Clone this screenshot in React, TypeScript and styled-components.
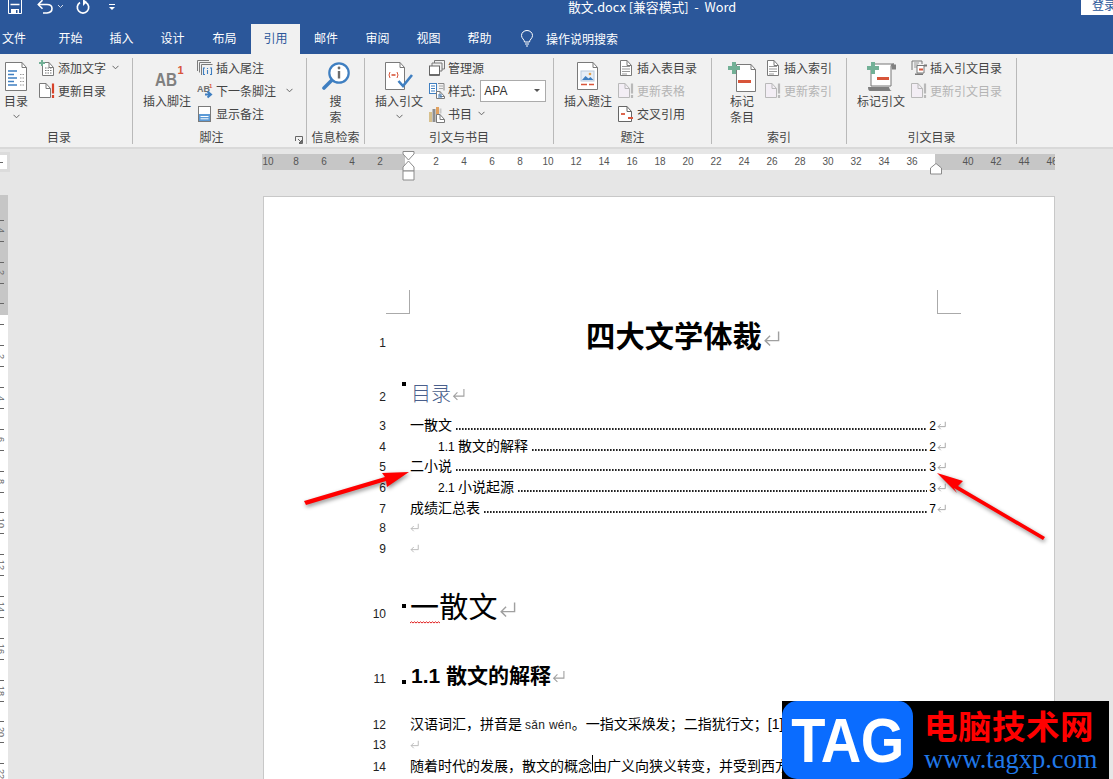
import React from 'react'
import styled, { createGlobalStyle } from 'styled-components'

const UI_FONT = `"Noto Sans CJK SC", sans-serif`
const DOC_FONT = `"Liberation Sans", "Noto Sans CJK SC", sans-serif`
const SERIF_FONT = `"Liberation Serif", "Noto Sans CJK SC", serif`
const OUTLINE = '#7a7a7a'
const BLUE = '#3f7fc1'
const RED = '#d8553a'
const GREEN = '#72b096'

//#region page
const GlobalStyle = createGlobalStyle`
  html, body { margin: 0; padding: 0; background: #e6e6e6; }
  * { box-sizing: border-box; }
`
const Window = styled.div`
  position: relative;
  width: 1113px;
  height: 779px;
  overflow: hidden;
  font-family: ${UI_FONT};
  background: #e6e6e6;
`
const TitleBar = styled.div`
  height: 24px;
  display: flex;
  align-items: flex-start;
  background: #2b579a;
  overflow: hidden;
`
const QuickAccess = styled.div`
  width: 568px;
  display: flex;
  align-items: flex-start;
  padding-left: 8px;
`
const QuickIcon = styled.span<{ $gap: number }>`
  display: block;
  height: 14px;
  margin-right: ${p => p.$gap}px;
  svg { display: block; }
`
const DocTitle = styled.div`
  flex: 1;
  color: #fff;
  font-size: 12.8px;
  line-height: 13px;
  white-space: pre;
`
const LoginButton = styled.div`
  width: 32px;
  height: 15px;
  background: #fff;
  color: #2b579a;
  font-size: 12px;
  line-height: 9px;
  padding-left: 11px;
  overflow: hidden;
  white-space: nowrap;
`
const TabBar = styled.div`
  height: 30px;
  display: flex;
  background: #2b579a;
`
const Tab = styled.div<{ $active?: boolean; $width: number; $left?: number }>`
  width: ${p => p.$width}px;
  flex: none;
  padding-right: ${p => p.$left ?? 0}px;
  text-align: center;
  font-size: 12px;
  line-height: 28px;
  color: ${p => (p.$active ? '#2b579a' : '#fff')};
  background: ${p => (p.$active ? '#f1f1f1' : 'transparent')};
`
const TellMe = styled.div`
  display: flex;
  align-items: center;
  height: 28px;
  gap: 12px;
  margin-left: 15px;
  color: #fff;
  font-size: 12px;
  svg { display: block; }
`
const Ribbon = styled.div`
  height: 95px;
  display: flex;
  padding-top: 4px;
  background: #f1f1f1;
  border-bottom: 2px solid #d9d9d9;
`
const Group = styled.div<{ $width: number }>`
  position: relative;
  width: ${p => p.$width}px;
  height: 86px;
  flex: none;
  display: flex;
  flex-direction: column;
  border-right: 1px solid #b9b9b9;
`
const GroupBody = styled.div<{ $pad: number }>`
  height: 71px;
  display: flex;
  padding-left: ${p => p.$pad}px;
`
const GroupLabel = styled.div<{ $right?: number }>`
  height: 15px;
  line-height: 15px;
  font-size: 12px;
  color: #444;
  text-align: center;
  padding-right: ${p => p.$right ?? 0}px;
`
const Launcher = styled.div`
  position: absolute;
  right: 3px;
  bottom: 0;
  svg { display: block; }
`
const BigButton = styled.div<{ $width: number }>`
  width: ${p => p.$width}px;
  flex: none;
  display: flex;
  flex-direction: column;
  align-items: center;
  padding-top: 4px;
  font-size: 12px;
  line-height: 16px;
  color: #444;
  text-align: center;
  white-space: nowrap;
`
const BigIcon = styled.div`
  height: 31px;
  svg { display: block; }
`
const ChevronLine = styled.div`
  height: 10px;
  display: flex;
  align-items: center;
  justify-content: center;
  margin-top: 2px;
`
const SmallColumn = styled.div<{ $left: number }>`
  margin-left: ${p => p.$left}px;
  margin-top: -2px;
`
const SmallRow = styled.div<{ $disabled?: boolean }>`
  height: 23px;
  display: flex;
  align-items: center;
  gap: 3px;
  font-size: 12px;
  white-space: nowrap;
  color: ${p => (p.$disabled ? '#b4b4b4' : '#444')};
`
const SmallIcon = styled.span`
  width: 16px;
  height: 16px;
  flex: none;
  display: block;
  svg { display: block; }
`
const RowChevron = styled.span<{ $left: number }>`
  display: block;
  margin-left: ${p => p.$left}px;
`
const StyleSelect = styled.div`
  width: 66px;
  height: 22px;
  margin-left: 2px;
  padding: 0 5px 0 3px;
  display: flex;
  align-items: center;
  justify-content: space-between;
  background: #fff;
  border: 1px solid #ababab;
  color: #333;
  font-family: ${DOC_FONT};
  font-size: 12px;
`
const SelectArrow = styled.span`
  width: 0;
  height: 0;
  border-left: 3px solid transparent;
  border-right: 3px solid transparent;
  border-top: 3px solid #555;
`
const RulerRow = styled.div`
  position: relative;
  height: 47px;
  display: flex;
  align-items: flex-start;
  padding-top: 5px;
`
const CornerBox = styled.div`
  width: 10px;
  height: 20px;
  margin-top: -2px;
  display: flex;
  align-items: center;
  background: #fff;
  border: 3px solid #dcdcdc;
  border-left: none;
`
const CornerDash = styled.span`
  width: 3px;
  height: 1px;
  background: #666;
`
const HorizontalRuler = styled.div`
  width: 793px;
  height: 16px;
  margin-left: 252px;
  display: flex;
  overflow: hidden;
  background: linear-gradient(90deg, #c6c6c6 143px, #fff 143px, #fff 673px, #c6c6c6 673px);
`
const RulerScale = styled.div`
  display: flex;
  margin-left: -8px;
`
const RulerNumber = styled.span`
  width: 28px;
  flex: none;
  text-align: center;
  font-family: ${DOC_FONT};
  font-size: 10px;
  line-height: 16px;
  color: #555;
`
const RulerMarker = styled.div<{ $left: number; $top: number }>`
  position: absolute;
  left: ${p => p.$left}px;
  top: ${p => p.$top}px;
  svg { display: block; }
`
const Workspace = styled.div`
  display: flex;
  align-items: flex-start;
`
const VerticalRuler = styled.div`
  width: 8px;
  margin-top: -1px;
  padding-top: 15px;
  height: 590px;
  overflow: hidden;
  background: linear-gradient(180deg, #c6c6c6 120px, #fff 120px);
`
const VerticalCell = styled.div`
  height: 41.8px;
  display: flex;
  flex-direction: column;
  justify-content: center;
  gap: 3px;
`
const VerticalTick = styled.span`
  display: block;
  width: 4px;
  height: 1px;
  background: #666;
`
const VerticalDigit = styled.span`
  height: 14px;
  width: 8px;
  margin-left: -3px;
  writing-mode: vertical-rl;
  text-align: center;
  font-family: ${DOC_FONT};
  font-size: 9px;
  line-height: 8px;
  color: #666;
  white-space: nowrap;
`
const Page = styled.div`
  position: relative;
  width: 792px;
  height: 640px;
  margin-left: 255px;
  padding-top: 120px;
  background: #fff;
  border: 1px solid #c8c8c8;
`
const CropMark = styled.div<{ $left: number; $side: 'left' | 'right' }>`
  position: absolute;
  top: 93px;
  left: ${p => p.$left}px;
  width: 24px;
  height: 24px;
  border-bottom: 1px solid #aaa;
  ${p => (p.$side === 'left' ? 'border-right: 1px solid #aaa;' : 'border-left: 1px solid #aaa;')}
`
const Line = styled.div<{ $h: number; $top?: number }>`
  position: relative;
  display: grid;
  grid-template-columns: 122px 1fr;
  column-gap: 24px;
  align-items: baseline;
  height: ${p => p.$h}px;
  margin-top: ${p => p.$top ?? 0}px;
  line-height: ${p => p.$h}px;
  color: #000;
  font-family: ${DOC_FONT};
  font-size: 14px;
  padding-right: 108px;
`
const LineNumber = styled.span`
  text-align: right;
  font-family: ${DOC_FONT};
  font-size: 12px;
  color: #222;
`
const LineText = styled.div<{ $indent?: number }>`
  display: flex;
  align-items: baseline;
  min-width: 0;
  padding-left: ${p => p.$indent ?? 0}px;
  white-space: nowrap;
`
const Latin = styled.span`
  font-size: 12px;
  white-space: pre;
`
const MainTitle = styled.div`
  width: 528px;
  text-align: center;
  font-size: 29.3px;
  font-weight: 700;
`
const TocHeading = styled.div`
  padding-left: 1px;
  color: #4a5f8c;
  font-size: 20px;
  font-weight: 300;
`
const Heading1 = styled.div`
  position: relative;
  font-family: ${SERIF_FONT};
  font-size: 29px;
  letter-spacing: 0.3px;
`
const Squiggle = styled.span`
  position: absolute;
  left: 0;
  bottom: 4px;
  svg { display: block; }
`
const Heading2 = styled.div`
  padding-left: 1px;
  font-size: 21px;
  font-weight: 700;
`
const TocLeader = styled.span`
  flex: 1;
  height: 2px;
  margin: 0 2px 0 4px;
  background: linear-gradient(90deg, #222 1px, #777 1px, #777 2px, transparent 2px) 0 0 / 3px 2px repeat-x;
`
const Pinyin = styled.span`
  margin: 0 0 0 3px;
  font-size: 12px;
  letter-spacing: 0.3px;
  color: #222;
`
const Caret = styled.span`
  display: inline-block;
  width: 1px;
  height: 16px;
  margin-bottom: -3px;
  background: #000;
`
const ParaBullet = styled.span<{ $top: number }>`
  position: absolute;
  left: 138px;
  top: ${p => p.$top}px;
  width: 4px;
  height: 4px;
  background: #000;
`
const MarkWrap = styled.span<{ $over?: number }>`
  display: inline-block;
  margin-left: 1px;
  margin-right: ${p => (p.$over ? -p.$over : 0)}px;
`
const ArrowLayer = styled.svg`
  position: absolute;
  left: 0;
  top: 0;
  filter: drop-shadow(1px 2px 2px rgba(0, 0, 0, 0.45));
`
const Watermark = styled.div`
  position: absolute;
  left: 782px;
  top: 701px;
  width: 327px;
  height: 78px;
  display: flex;
  background: #000;
`
const LogoBadge = styled.div`
  width: 131px;
  height: 78px;
  border-radius: 15px;
  background: #0a6cff;
  color: #fff;
  font-family: ${DOC_FONT};
  font-size: 56px;
  font-weight: 700;
  line-height: 78px;
  text-align: center;
  letter-spacing: -0.5px;
`
const LogoLetters = styled.span`
  display: inline-block;
  transform: scaleY(1.14);
`
const LogoText = styled.div`
  flex: 1;
  padding: 5px 0 0 11px;
`
const LogoName = styled.div`
  color: #f00;
  font-size: 33.5px;
  font-weight: 700;
  line-height: 38px;
  letter-spacing: 0.5px;
  white-space: nowrap;
`
const LogoUrl = styled.div`
  color: #2078e8;
  font-family: ${SERIF_FONT};
  font-size: 26.5px;
  line-height: 30px;
  white-space: nowrap;
`
//#endregion

const Chevron = ({ color = '#666' }: { color?: string }) => (
  <svg width="7" height="5" viewBox="0 0 7 5" fill="none" style={{ display: 'block' }}>
    <path d="M.5 .8 3.5 3.8 6.5 .8" stroke={color} />
  </svg>
)

const ReturnMark = ({ size = 9, color = '#a0a0a0' }: { size?: number; color?: string }) => (
  <svg width={size} height={size} viewBox="0 0 12 12" fill="none">
    <path d="M11 1V7.5H1.5M5 4 1.5 7.5 5 11" stroke={color} strokeWidth={12 / size > 1 ? 1.2 : 1} />
  </svg>
)

const Sheet = ({ w = 14, h = 16, x = 0, y = 0, fill = '#fff', stroke = OUTLINE }: any) => (
  <>
    <path d={`M${x + .5} ${y + .5}H${x + w - 5}L${x + w - .5} ${y + 5.5}V${y + h - .5}H${x + .5}Z`} fill={fill} stroke={stroke} />
    <path d={`M${x + w - 5} ${y + .5}V${y + 5.5}H${x + w - .5}`} fill="none" stroke={stroke} />
  </>
)

const Plus = ({ x = 0, y = 0 }: { x?: number; y?: number }) => (
  <path d={`M${x + 4} ${y}h4v4h4v4h-4v4h-4v-4h-4v-4h4z`} fill={GREEN} />
)

const TocIcon = () => (
  <svg width="22" height="29" viewBox="0 0 22 29">
    <Sheet w={22} h={29} />
    <path d="M3 9h9M3 12.5h6M3 16h9M3 19.500h6M3 23h9" stroke={BLUE} strokeWidth="1.6" />
    <path d="M15 12.500h4M15 19.500h4M15 23h4M15 16h4" stroke="#9a9a9a" strokeWidth="1.2" strokeDasharray="1.500 1" />
  </svg>
)

const AddTextIcon = () => (
  <svg width="16" height="16" viewBox="0 0 16 16">
    <Sheet x={3} y={2} w={12} h={14} />
    <path d="M6 8h7M6 10.500h7M6 13h7" stroke="#777" strokeDasharray="1.500 1" />
    <path d="M2 0h2v2h2v2h-2v2h-2v-2h-2v-2h2z" fill={GREEN} />
  </svg>
)

const UpdateIcon = ({ disabled }: { disabled?: boolean }) => (
  <svg width="16" height="16" viewBox="0 0 16 16">
    <Sheet w={12} h={15} fill={disabled ? '#f3eef5' : '#fff'} stroke={disabled ? '#b9b9b9' : OUTLINE} />
    <path d="M14 .5v10M14 12v3" stroke={disabled ? '#b9b9b9' : '#d8432a'} strokeWidth="2.200" />
  </svg>
)

const FootnoteIcon = () => (
  <svg width="48" height="30" viewBox="0 0 48 30">
    <text x="12" y="24" fontFamily="Liberation Sans" fontWeight="700" fontSize="19" fill="#808080" textLength="22" lengthAdjust="spacingAndGlyphs">AB</text>
    <text x="34.500" y="12" fontFamily="Liberation Sans" fontWeight="700" fontSize="11" fill={RED}>1</text>
  </svg>
)

const EndnoteIcon = () => (
  <svg width="16" height="16" viewBox="0 0 16 16" fill="none">
    <path d="M.5 11V.5H12M2.500 12.500V2.500H14M4.500 15V4.500H15.500" stroke="#7c7c7c" />
    <path d="M8 8h-1.500v6.500H8M13 8h1.500v6.500H13M10.500 8v1M10.500 10v4" stroke={BLUE} strokeWidth="1.100" />
  </svg>
)

const NextNoteIcon = () => (
  <svg width="16" height="16" viewBox="0 0 16 16">
    <text x="0" y="9" fontFamily="Liberation Sans" fontWeight="700" fontSize="9" fill="#6f6f6f">AB</text>
    <text x="12" y="5" fontFamily="Liberation Sans" fontWeight="700" fontSize="6" fill={RED}>1</text>
    <path d="M8 11.500h5M10.500 8.500l3.500 3-3.500 3" fill="none" stroke={BLUE} strokeWidth="2" />
  </svg>
)

const ShowNotesIcon = () => (
  <svg width="16" height="16" viewBox="0 0 16 16">
    <rect x="1.500" y=".5" width="12" height="15" fill="#fff" stroke={OUTLINE} />
    <rect x="2" y="8" width="11" height="7" fill="#5c9ad6" />
    <path d="M3.500 10.500h8M3.500 12.800h8" stroke="#fff" />
  </svg>
)

const SearchIcon = () => (
  <svg width="28" height="29" viewBox="0 0 28 29" fill="none">
    <circle cx="17" cy="11" r="9.700" stroke={BLUE} strokeWidth="2.200" fill="#fff" />
    <path d="M9.500 18.500 2 26" stroke={BLUE} strokeWidth="3.600" strokeLinecap="round" />
    <circle cx="17" cy="6" r="1.400" fill="#6d6d6d" />
    <path d="M17 9v7.500" stroke="#6d6d6d" strokeWidth="2.400" />
  </svg>
)

const CitationIcon = () => (
  <svg width="28" height="29" viewBox="0 0 28 29" fill="none">
    <Sheet w={20} h={28} />
    <path d="M5 10q-2 3 0 6M12 10q2 3 0 6" stroke={RED} />
    <path d="M6.500 13h4" stroke={RED} strokeWidth="1.600" />
    <path d="M13.500 19 18 24 27 13" stroke={BLUE} strokeWidth="2.600" />
  </svg>
)

const ManageIcon = () => (
  <svg width="16" height="16" viewBox="0 0 16 16" fill="none">
    <path d="M5.500 3V.5H15.500V9H13" stroke="#777" />
    <path d="M3 6V3H13V11H11" stroke="#777" />
    <rect x=".5" y="6" width="10" height="9" fill="#fff" stroke="#666" />
    <path d="M.5 15h10" stroke="#555" strokeWidth="1.500" />
  </svg>
)

const StyleIcon = () => (
  <svg width="16" height="16" viewBox="0 0 16 16" fill="none">
    <rect x=".5" y=".5" width="7" height="10" fill="#fff" stroke={BLUE} />
    <path d="M2 3h4M2 5.500h4M2 8h4" stroke={BLUE} />
    <path d="M9 .5h6v7" stroke="#888" />
    <path d="M10 3h4M10 5.500h4" stroke="#aaa" />
    <Sheet x={7} y={8} w={9} h={8} />
    <path d="M9 12h4M9 14h4" stroke={BLUE} />
  </svg>
)

const BiblioIcon = () => (
  <svg width="16" height="17" viewBox="0 0 16 17">
    <rect x="0" y="6" width="3" height="10" fill="#d7c08d" />
    <rect x="3.500" y="3" width="3" height="13" fill="#8f8f8f" />
    <rect x="7" y="1" width="3" height="9" fill="#e1a15f" />
    <path d="M10.500 2.500h2v5h-2z" fill="#c9c9c9" />
    <Sheet x={7} y={8} w={9} h={9} />
  </svg>
)

const CaptionIcon = () => (
  <svg width="22" height="29" viewBox="0 0 22 29">
    <Sheet w={21} h={28} />
    <rect x="4" y="9" width="13" height="10" fill="#e7eef6" stroke="#b9c9db" />
    <path d="M5 18l3.500-4 3 2.500 2-1.500 3 3z" fill={BLUE} />
    <circle cx="13" cy="12" r="1.300" fill="#e3a14b" />
    <path d="M4 22.500h6M12 22.500h5" stroke={RED} strokeWidth="1.300" />
  </svg>
)

const LinesDocIcon = () => (
  <svg width="16" height="16" viewBox="0 0 16 16">
    <Sheet x={2} w={12} h={16} />
    <path d="M4 6.500h8M4 9h8M4 11.500h8M4 14h5" stroke="#999" />
  </svg>
)

const CrossRefIcon = () => (
  <svg width="16" height="16" viewBox="0 0 16 16">
    <Sheet w={14} h={16} stroke="#666" />
    <path d="M3 8h4" stroke={RED} strokeWidth="1.800" />
    <rect x="10" y="11" width="5" height="2" fill={RED} />
  </svg>
)

const MarkEntryIcon = () => (
  <svg width="28" height="31" viewBox="0 0 28 31">
    <Sheet x={8} y={2} w={20} h={28} />
    <rect x="10" y="18" width="13" height="3" fill={RED} />
    <Plus x={0} y={0} />
  </svg>
)

const MarkCitationIcon = () => (
  <svg width="32" height="31" viewBox="0 0 32 31">
    <path d="M6 6V24H26V4Q26 2 29 2H8" fill="#fff" stroke="#777" />
    <path d="M26 2.500h5v5h-4z" fill="#808080" />
    <path d="M3 25h21q1 4 3 4H5q-2 0-2-4z" fill="#808080" />
    <rect x="12" y="15" width="12" height="3" fill={RED} />
    <Plus x={2} y={0} />
  </svg>
)

const InsertCitationTocIcon = () => (
  <svg width="16" height="16" viewBox="0 0 16 16" fill="none">
    <path d="M1 10V1H11V4" stroke="#777" />
    <path d="M3 3h5M3 5h4M3 7h3" stroke="#999" />
    <path d="M6 5.500h7V13H6z" fill="#fff" stroke="#777" />
    <rect x="8" y="8.500" width="4" height="2" fill={RED} />
    <path d="M4 13.500h8V15H4z" fill="#777" />
    <path d="M13 4.500h3v2h-3z" fill="#777" />
  </svg>
)

const TABS = [
  { name: '文件', width: 45, left: 17 }, { name: '开始', width: 51 }, { name: '插入', width: 51 }, { name: '设计', width: 51 },
  { name: '布局', width: 53 }, { name: '引用', width: 49, active: true },
  { name: '邮件', width: 52 }, { name: '审阅', width: 51 }, { name: '视图', width: 51 }, { name: '帮助', width: 51 }
]

const H_RULER = [10, 8, 6, 4, 2, '', 2, 4, 6, 8, 10, 12, 14, 16, 18, 20, 22, 24, 26, 28, 30, 32, 34, 36, '', 40, 42, 44, 46]
const V_RULER = [4, 2, '', 2, 4, 6, 8, 10, 12, 14, 16, 18, 20, 22, 24]

function Small({ icon, text, disabled, children }: { icon: React.ReactNode; text: string; disabled?: boolean; children?: React.ReactNode }) {
  return (
    <SmallRow $disabled={disabled}>
      <SmallIcon>{icon}</SmallIcon>
      {text}
      {children}
    </SmallRow>
  )
}

function Big({ width, icon, lines, chevron }: { width: number; icon: React.ReactNode; lines: string[]; chevron?: boolean }) {
  return (
    <BigButton $width={width}>
      <BigIcon>{icon}</BigIcon>
      {lines.map(l => <div key={l}>{l}</div>)}
      {chevron && <ChevronLine><Chevron /></ChevronLine>}
    </BigButton>
  )
}

export default function App() {
  return (
    <Window>
      <GlobalStyle />
      <TitleBar>
        <QuickAccess>
          <QuickIcon $gap={15}>
            <svg width="14" height="14" viewBox="0 0 14 14" fill="none">
              <path d="M.5 -1V13.500H13.500V-1" fill="#2b579a" stroke="#fff" />
              <rect x="3" y="9" width="8" height="5" fill="#fff" />
              <rect x="8" y="10" width="1.500" height="3" fill="#2b579a" />
              <path d="M2.500 4.500h9" stroke="#fff" strokeWidth="1.500" />
            </svg>
          </QuickIcon>
          <QuickIcon $gap={4}>
            <svg width="16" height="14" viewBox="0 0 16 14" fill="none">
              <path d="M1.500 4.500H10Q15 4.500 15 8.500T10 13H6" stroke="#fff" strokeWidth="1.600" />
              <path d="M5.500 .2 1.300 4.500 5.500 8.800" stroke="#fff" strokeWidth="1.600" />
            </svg>
          </QuickIcon>
          <QuickIcon $gap={12}>
            <svg width="7" height="12" viewBox="0 0 7 12" fill="none">
              <path d="M1 5 3.500 7.500 6 5" stroke="#d5deeb" />
            </svg>
          </QuickIcon>
          <QuickIcon $gap={19}>
            <svg width="14" height="14" viewBox="0 0 14 14" fill="none">
              <path d="M4 2.500A5.700 5.700 0 1 0 10 2.500" stroke="#fff" strokeWidth="1.700" />
              <path d="M7 -1V6L11 2z" fill="#fff" />
            </svg>
          </QuickIcon>
          <QuickIcon $gap={0}>
            <svg width="6" height="12" viewBox="0 0 6 12">
              <path d="M0 4.500h6" stroke="#fff" />
              <path d="M0 7h6l-3 3z" fill="#fff" />
            </svg>
          </QuickIcon>
        </QuickAccess>
        <DocTitle>散文.docx [兼容模式]  -  Word</DocTitle>
        <LoginButton>登录</LoginButton>
      </TitleBar>

      <TabBar>
        {TABS.map(t => (
          <Tab key={t.name} $width={t.width} $active={t.active} $left={t.left}>{t.name}</Tab>
        ))}
        <TellMe>
          <svg width="14" height="17" viewBox="0 0 14 17" fill="none" stroke="#fff">
            <path d="M4.500 12C4.500 9.500 1.500 8.500 1.500 5.500A5.500 5 0 0 1 12.500 5.500C12.500 8.500 9.500 9.500 9.500 12Z" />
            <path d="M5 14h4M6 16h2" />
          </svg>
          操作说明搜索
        </TellMe>
      </TabBar>

      <Ribbon>
        <Group $width={133}>
          <GroupBody $pad={0}>
            <Big width={32} icon={<TocIcon />} lines={['目录']} chevron />
            <SmallColumn $left={7}>
              <Small icon={<AddTextIcon />} text="添加文字">
                <RowChevron $left={3}><Chevron /></RowChevron>
              </Small>
              <Small icon={<UpdateIcon />} text="更新目录" />
            </SmallColumn>
          </GroupBody>
          <GroupLabel $right={14}>目录</GroupLabel>
        </Group>

        <Group $width={174}>
          <GroupBody $pad={10}>
            <Big width={48} icon={<FootnoteIcon />} lines={['插入脚注']} />
            <SmallColumn $left={6}>
              <Small icon={<EndnoteIcon />} text="插入尾注" />
              <Small icon={<NextNoteIcon />} text="下一条脚注">
                <RowChevron $left={7}><Chevron /></RowChevron>
              </Small>
              <Small icon={<ShowNotesIcon />} text="显示备注" />
            </SmallColumn>
          </GroupBody>
          <GroupLabel $right={16}>脚注</GroupLabel>
          <Launcher>
            <svg width="8" height="8" viewBox="0 0 8 8" fill="none" stroke="#666">
              <path d="M.5 5V.5H7.500V7.500H4M3 3 6.500 6.500M6.500 4V6.500H4" />
            </svg>
          </Launcher>
        </Group>

        <Group $width={58}>
          <GroupBody $pad={0}>
            <Big width={57} icon={<SearchIcon />} lines={['搜', '索']} />
          </GroupBody>
          <GroupLabel>信息检索</GroupLabel>
        </Group>

        <Group $width={189}>
          <GroupBody $pad={10}>
            <Big width={48} icon={<CitationIcon />} lines={['插入引文']} chevron />
            <SmallColumn $left={6}>
              <Small icon={<ManageIcon />} text="管理源" />
              <Small icon={<StyleIcon />} text="样式:">
                <StyleSelect>APA<SelectArrow /></StyleSelect>
              </Small>
              <Small icon={<BiblioIcon />} text="书目">
                <RowChevron $left={3}><Chevron /></RowChevron>
              </Small>
            </SmallColumn>
          </GroupBody>
          <GroupLabel>引文与书目</GroupLabel>
        </Group>

        <Group $width={158}>
          <GroupBody $pad={10}>
            <Big width={48} icon={<CaptionIcon />} lines={['插入题注']} />
            <SmallColumn $left={6}>
              <Small icon={<LinesDocIcon />} text="插入表目录" />
              <Small icon={<UpdateIcon disabled />} text="更新表格" disabled />
              <Small icon={<CrossRefIcon />} text="交叉引用" />
            </SmallColumn>
          </GroupBody>
          <GroupLabel>题注</GroupLabel>
        </Group>

        <Group $width={135}>
          <GroupBody $pad={12}>
            <Big width={36} icon={<MarkEntryIcon />} lines={['标记', '条目']} />
            <SmallColumn $left={5}>
              <Small icon={<LinesDocIcon />} text="插入索引" />
              <Small icon={<UpdateIcon disabled />} text="更新索引" disabled />
            </SmallColumn>
          </GroupBody>
          <GroupLabel>索引</GroupLabel>
        </Group>

        <Group $width={170}>
          <GroupBody $pad={10}>
            <Big width={48} icon={<MarkCitationIcon />} lines={['标记引文']} />
            <SmallColumn $left={6}>
              <Small icon={<InsertCitationTocIcon />} text="插入引文目录" />
              <Small icon={<UpdateIcon disabled />} text="更新引文目录" disabled />
            </SmallColumn>
          </GroupBody>
          <GroupLabel>引文目录</GroupLabel>
        </Group>
      </Ribbon>

      <RulerRow>
        <CornerBox><CornerDash /></CornerBox>
        <HorizontalRuler>
          <RulerScale>
            {H_RULER.map((n, i) => <RulerNumber key={i}>{n}</RulerNumber>)}
          </RulerScale>
        </HorizontalRuler>
        <RulerMarker $left={402} $top={2}>
          <svg width="13" height="30" viewBox="0 0 13 30" fill="#fff" stroke="#8a8a8a">
            <path d="M1 .5H12V3L6.500 9 1 3Z" />
            <path d="M6.500 10 12 16V20H1V16Z" />
            <path d="M1 20H12V29H1Z" />
          </svg>
        </RulerMarker>
        <RulerMarker $left={930} $top={14}>
          <svg width="12" height="12" viewBox="0 0 12 12" fill="#fff" stroke="#8a8a8a">
            <path d="M.5 5 6 .5 11.500 5V11H.5Z" />
          </svg>
        </RulerMarker>
      </RulerRow>

      <Workspace>
        <VerticalRuler>
          {V_RULER.map((n, i) => (
            <VerticalCell key={i}>
              <VerticalTick />
              <VerticalDigit>{n}</VerticalDigit>
              <VerticalTick />
            </VerticalCell>
          ))}
        </VerticalRuler>

        <Page>
          <CropMark $left={122} $side="left" />
          <CropMark $left={673} $side="right" />

          <Line $h={40}>
            <LineNumber>1</LineNumber>
            <MainTitle>
              四大文学体裁<MarkWrap $over={18}><ReturnMark size={17} /></MarkWrap>
            </MainTitle>
          </Line>
          <Line $h={34} $top={20}>
            <ParaBullet $top={5} />
            <LineNumber>2</LineNumber>
            <TocHeading>目录<MarkWrap><ReturnMark size={13} /></MarkWrap></TocHeading>
          </Line>
          <Line $h={20.7} $top={4}>
            <LineNumber>3</LineNumber>
            <LineText>一散文<TocLeader /><Latin>2</Latin><MarkWrap><ReturnMark /></MarkWrap></LineText>
          </Line>
          <Line $h={20.7}>
            <LineNumber>4</LineNumber>
            <LineText $indent={28}><Latin>1.1 </Latin>散文的解释<TocLeader /><Latin>2</Latin><MarkWrap><ReturnMark /></MarkWrap></LineText>
          </Line>
          <Line $h={20.7}>
            <LineNumber>5</LineNumber>
            <LineText>二小说<TocLeader /><Latin>3</Latin><MarkWrap><ReturnMark /></MarkWrap></LineText>
          </Line>
          <Line $h={20.7}>
            <LineNumber>6</LineNumber>
            <LineText $indent={28}><Latin>2.1 </Latin>小说起源<TocLeader /><Latin>3</Latin><MarkWrap><ReturnMark /></MarkWrap></LineText>
          </Line>
          <Line $h={20.7}>
            <LineNumber>7</LineNumber>
            <LineText>成绩汇总表<TocLeader /><Latin>7</Latin><MarkWrap><ReturnMark /></MarkWrap></LineText>
          </Line>
          <Line $h={20.7}>
            <LineNumber>8</LineNumber>
            <LineText><ReturnMark color="#b5b5b5" /></LineText>
          </Line>
          <Line $h={20.7}>
            <LineNumber>9</LineNumber>
            <LineText><ReturnMark color="#b5b5b5" /></LineText>
          </Line>
          <Line $h={40} $top={28.5}>
            <ParaBullet $top={16} />
            <LineNumber>10</LineNumber>
            <Heading1>
              一散文<MarkWrap><ReturnMark size={17} /></MarkWrap>
              <Squiggle>
                <svg width="30" height="3" viewBox="0 0 30 3" fill="none" stroke="#e02020">
                  <path d="M0 2 1.500 .8 3 2 4.500 .8 6 2 7.500 .8 9 2 10.500 .8 12 2 13.500 .8 15 2 16.500 .8 18 2 19.500 .8 21 2 22.500 .8 24 2 25.500 .8 27 2 28.500 .8 30 2" />
                </svg>
              </Squiggle>
            </Heading1>
          </Line>
          <Line $h={30} $top={33}>
            <ParaBullet $top={19} />
            <LineNumber>11</LineNumber>
            <Heading2>1.1 散文的解释<MarkWrap><ReturnMark size={13} /></MarkWrap></Heading2>
          </Line>
          <Line $h={20.7} $top={22.6}>
            <LineNumber>12</LineNumber>
            <LineText>汉语词汇，拼音是<Pinyin>sǎn wén</Pinyin>。一指文采焕发；二指犹行文；[1]</LineText>
          </Line>
          <Line $h={20.7}>
            <LineNumber>13</LineNumber>
            <LineText><ReturnMark color="#b5b5b5" /></LineText>
          </Line>
          <Line $h={20.7}>
            <LineNumber>14</LineNumber>
            <LineText>随着时代的发展，散文的概念<Caret />由广义向狭义转变，并受到西方文学</LineText>
          </Line>
        </Page>
      </Workspace>

      <ArrowLayer width="1113" height="779" viewBox="0 0 1113 779">
        <path d="M304 501 385 477 382 473 409 472 387 487 386 481 306 505Z" fill="#f00" />
        <path d="M937 473 963 481 958 486 1045 537 1043 540 954 488 957 493Z" fill="#f00" />
      </ArrowLayer>

      <Watermark>
        <LogoBadge><LogoLetters>TAG</LogoLetters></LogoBadge>
        <LogoText>
          <LogoName>电脑技术网</LogoName>
          <LogoUrl>www.tagxp.com</LogoUrl>
        </LogoText>
      </Watermark>
    </Window>
  )
}
